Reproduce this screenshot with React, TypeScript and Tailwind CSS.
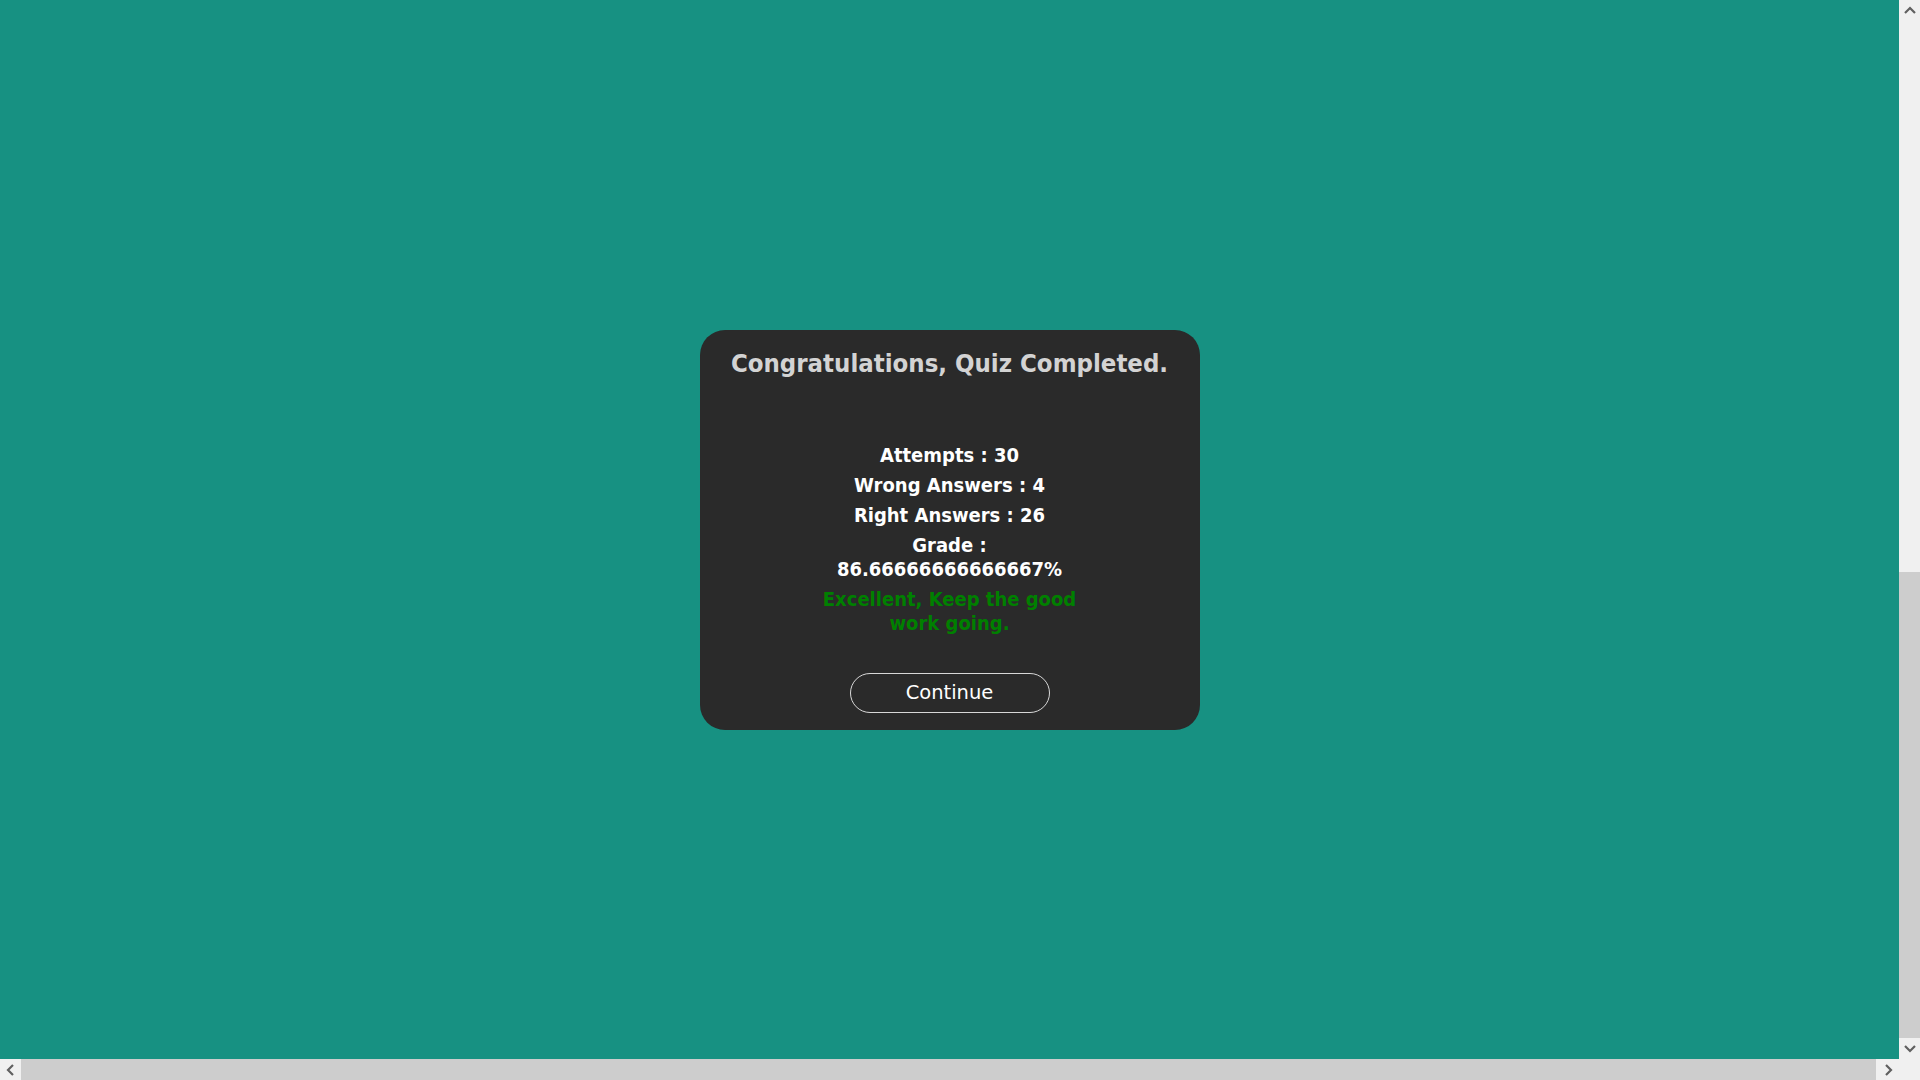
import { ReactNode } from "react";

const stats = [
  { label: "Attempts", value: "30" },
  { label: "Wrong Answers", value: "4" },
  { label: "Right Answers", value: "26" },
];

function Arrow({ dir }: { dir: "up" | "down" | "left" | "right" }) {
  const paths: Record<string, string> = {
    up: "M2 8 L7 3 L12 8",
    down: "M2 3 L7 8 L12 3",
    left: "M8 2 L3 7 L8 12",
    right: "M3 2 L8 7 L3 12",
  };
  const vertical = dir === "up" || dir === "down";
  return (
    <svg
      width={vertical ? 14 : 11}
      height={vertical ? 11 : 14}
      viewBox={vertical ? "0 0 14 11" : "0 0 11 14"}
      fill="none"
    >
      <path d={paths[dir]} stroke="#606060" strokeWidth="2.2" />
    </svg>
  );
}

function ScrollButton({ children }: { children: ReactNode }) {
  return (
    <div className="w-[21px] h-[21px] flex items-center justify-center shrink-0">
      {children}
    </div>
  );
}

export default function App() {
  const grade = (26 / 30) * 100;

  return (
    <div className="w-screen h-screen flex flex-col overflow-hidden bg-[#f0f0f0]">
      <div className="flex flex-1 min-h-0">
        {/* page content */}
        <main className="flex-1 bg-[#179182] flex items-center justify-center">
          <div className="w-[500px] h-[400px] bg-[#2a2a2a] rounded-[25px] flex flex-col items-center font-['DejaVu_Sans_Condensed','DejaVu_Sans',sans-serif]">
            <h1 className="mt-[18px] text-[25.5px] leading-[30px] font-bold text-[#d3d3d3]">
              Congratulations, Quiz Completed.
            </h1>

            <div className="mt-[65px] w-[262px] flex flex-col gap-[6px] text-center text-[20px] leading-[24px] font-bold text-white">
              {stats.map((s) => (
                <p key={s.label}>
                  {s.label} : {s.value}
                </p>
              ))}
              <p>Grade : {grade}%</p>
              <p className="text-[#008000]">Excellent, Keep the good work going.</p>
            </div>

            <button className="mt-[38px] w-[200px] h-[40px] rounded-full border border-[#d8d8d8] text-white text-[19.5px] font-['DejaVu_Sans',sans-serif]">
              Continue
            </button>
          </div>
        </main>

        {/* vertical scrollbar */}
        <div className="w-[21px] flex flex-col bg-[#f0f0f0]">
          <ScrollButton>
            <Arrow dir="up" />
          </ScrollButton>
          <div className="flex-1 flex flex-col">
            <div className="h-[551px]" />
            <div className="flex-1 bg-[#cdcdcd]" />
          </div>
          <ScrollButton>
            <Arrow dir="down" />
          </ScrollButton>
        </div>
      </div>

      {/* horizontal scrollbar */}
      <div className="h-[21px] flex bg-[#f0f0f0]">
        <ScrollButton>
          <Arrow dir="left" />
        </ScrollButton>
        <div className="flex-1 flex">
          <div className="flex-1 bg-[#cdcdcd] mr-[2px]" />
        </div>
        <ScrollButton>
          <Arrow dir="right" />
        </ScrollButton>
        <div className="w-[21px]" />
      </div>
    </div>
  );
}
